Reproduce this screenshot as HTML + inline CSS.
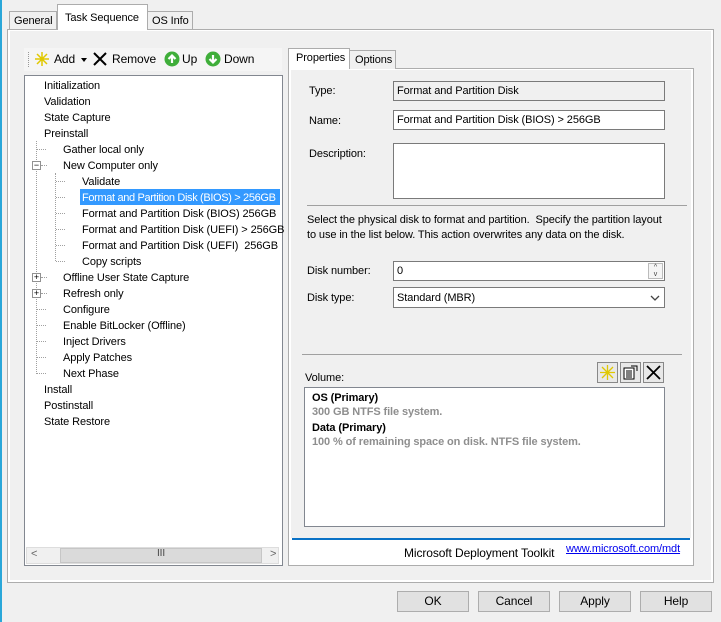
<!DOCTYPE html>
<html><head><style>
*{margin:0;padding:0;box-sizing:border-box}
body{width:721px;height:622px;background:#f0f0f0;font-family:"Liberation Sans",sans-serif;font-size:11px;letter-spacing:-0.1px;color:#000;position:relative;overflow:hidden;white-space:nowrap}
.a{position:absolute;white-space:nowrap}
.tab{position:absolute;border:1px solid #acacac;border-bottom:none;background:#f0f0f0;padding-left:5px;white-space:nowrap}
.box{position:absolute;border:1px solid #7a7a7a;background:#fff;padding:3px 3px;white-space:nowrap}
.btn{position:absolute;top:591px;width:72px;height:21px;border:1px solid #adadad;background:#e1e1e1;text-align:center;line-height:19px;font-size:12px}
.tr{position:absolute;height:16px;line-height:18px;white-space:nowrap}
.dot{position:absolute;border-top:1px dotted #a0a0a0;width:9px}
.vl{position:absolute;border-left:1px dotted #a0a0a0}
.pm{position:absolute;width:9px;height:9px;border:1px solid #919191;background:#fff;font-size:9px;line-height:7px;text-align:center;color:#000}
</style></head><body>
<div class="a" style="left:0;top:0;width:2px;height:622px;background:#2aa7d9"></div>
<div class="a" style="left:7px;top:29px;width:707px;height:554px;border:1px solid #adadad;background:#fff"></div>
<div class="a" style="left:10px;top:31px;width:701px;height:549px;background:#f0f0f0"></div>
<div class="tab" style="left:9px;top:11px;width:48px;height:18px;line-height:18px;padding-left:4px">General</div>
<div class="tab" style="left:57px;top:4px;width:91px;height:26px;background:#fff;padding-left:7px;line-height:14px;padding-top:6px">Task Sequence</div>
<div class="tab" style="left:147px;top:11px;width:46px;height:18px;line-height:18px;padding-left:4px">OS Info</div>

<div class="a" style="left:24px;top:48px;width:258px;height:23px;background:#f5f5f5"></div>
<div class="a" style="left:28px;top:52px;height:15px;border-left:1px dotted #999"></div>
<svg class="a" style="left:34px;top:51px" width="16" height="16"><g stroke="#e0c800" stroke-width="1.5"><path d="M8 1V15M1 8H15M3 3L13 13M13 3L3 13"/></g></svg>
<div class="a" style="left:54px;top:52px;font-size:12px">Add</div>
<div class="a" style="left:81px;top:58px;border:3px solid transparent;border-top:4px solid #000"></div>
<svg class="a" style="left:93px;top:52px" width="14" height="14"><path d="M1 1L13 13M13 1L1 13" stroke="#000" stroke-width="2"/></svg>
<div class="a" style="left:112px;top:52px;font-size:12px">Remove</div>
<svg class="a" style="left:164px;top:51px" width="16" height="16"><circle cx="8" cy="8" r="7.5" fill="#3fae3a"/><path d="M8 12V5M4.5 8L8 4.5 11.5 8" stroke="#fff" stroke-width="2.2" fill="none"/></svg>
<div class="a" style="left:182px;top:52px;font-size:12px">Up</div>
<svg class="a" style="left:205px;top:51px" width="16" height="16"><circle cx="8" cy="8" r="7.5" fill="#3fae3a"/><path d="M8 4V11M4.5 8L8 11.5 11.5 8" stroke="#fff" stroke-width="2.2" fill="none"/></svg>
<div class="a" style="left:224px;top:52px;font-size:12px">Down</div>

<div class="a" style="left:24px;top:75px;width:259px;height:491px;border:1px solid #828790;background:#fff"></div>
<div class="tr" style="left:44px;top:77px">Initialization</div>
<div class="tr" style="left:44px;top:93px">Validation</div>
<div class="tr" style="left:44px;top:109px">State Capture</div>
<div class="tr" style="left:44px;top:125px">Preinstall</div>
<div class="vl" style="left:36px;top:141px;height:233px"></div>
<div class="vl" style="left:55px;top:173px;height:88px"></div>
<div class="dot" style="left:37px;top:149px"></div><div class="tr" style="left:63px;top:141px">Gather local only</div>
<div class="pm" style="left:32px;top:161px">−</div><div class="dot" style="left:41px;top:165px;width:6px"></div><div class="tr" style="left:63px;top:157px">New Computer only</div>
<div class="dot" style="left:56px;top:181px"></div><div class="tr" style="left:82px;top:173px">Validate</div>
<div class="dot" style="left:56px;top:197px"></div><div class="tr" style="left:80px;top:189px;width:200px;background:#3399ff;color:#fff;padding-left:2px;letter-spacing:-0.35px;overflow:hidden">Format and Partition Disk (BIOS) &gt; 256GB</div>
<div class="dot" style="left:56px;top:213px"></div><div class="tr" style="left:82px;top:205px">Format and Partition Disk (BIOS) 256GB</div>
<div class="dot" style="left:56px;top:229px"></div><div class="tr" style="left:82px;top:221px">Format and Partition Disk (UEFI) &gt; 256GB</div>
<div class="dot" style="left:56px;top:245px"></div><div class="tr" style="left:82px;top:237px">Format and Partition Disk (UEFI)&nbsp; 256GB</div>
<div class="dot" style="left:56px;top:261px"></div><div class="tr" style="left:82px;top:253px">Copy scripts</div>
<div class="pm" style="left:32px;top:273px">+</div><div class="dot" style="left:41px;top:277px;width:6px"></div><div class="tr" style="left:63px;top:269px">Offline User State Capture</div>
<div class="pm" style="left:32px;top:289px">+</div><div class="dot" style="left:41px;top:293px;width:6px"></div><div class="tr" style="left:63px;top:285px">Refresh only</div>
<div class="dot" style="left:37px;top:309px"></div><div class="tr" style="left:63px;top:301px">Configure</div>
<div class="dot" style="left:37px;top:325px"></div><div class="tr" style="left:63px;top:317px">Enable BitLocker (Offline)</div>
<div class="dot" style="left:37px;top:341px"></div><div class="tr" style="left:63px;top:333px">Inject Drivers</div>
<div class="dot" style="left:37px;top:357px"></div><div class="tr" style="left:63px;top:349px">Apply Patches</div>
<div class="dot" style="left:37px;top:373px"></div><div class="tr" style="left:63px;top:365px">Next Phase</div>
<div class="tr" style="left:44px;top:381px">Install</div>
<div class="tr" style="left:44px;top:397px">Postinstall</div>
<div class="tr" style="left:44px;top:413px">State Restore</div>
<div class="a" style="left:26px;top:547px;width:253px;height:17px;background:#f0f0f0;border:1px solid #ddd"></div>
<div class="a" style="left:31px;top:548px;color:#666;font-size:11px">&lt;</div>
<div class="a" style="left:270px;top:548px;color:#666;font-size:11px">&gt;</div>
<div class="a" style="left:60px;top:548px;width:202px;height:15px;background:#dadada;border:1px solid #c6c6c6"></div>
<div class="a" style="left:157px;top:548px;font-size:10px;color:#444">III</div>

<div class="a" style="left:288px;top:68px;width:406px;height:498px;border:1px solid #adadad;background:#fff"></div>
<div class="a" style="left:291px;top:70px;width:400px;height:468px;background:#f0f0f0"></div>
<div class="tab" style="left:288px;top:48px;width:62px;height:21px;background:#fff;line-height:18px;padding-left:7px">Properties</div>
<div class="tab" style="left:349px;top:50px;width:47px;height:19px;line-height:19px;padding-left:5px">Options</div>
<div class="a" style="left:309px;top:85px">Type:</div>
<div class="box" style="left:393px;top:81px;width:272px;height:20px;background:#f0f0f0;padding-top:3px">Format and Partition Disk</div>
<div class="a" style="left:309px;top:115px">Name:</div>
<div class="box" style="left:393px;top:110px;width:272px;height:20px;padding-top:3px">Format and Partition Disk (BIOS) &gt; 256GB</div>
<div class="a" style="left:309px;top:148px">Description:</div>
<div class="box" style="left:393px;top:143px;width:272px;height:56px"></div>
<div class="a" style="left:307px;top:205px;width:380px;height:1px;background:#a0a0a0"></div>
<div class="a" style="left:307px;top:213px;line-height:15px">Select the physical disk to format and partition.&nbsp; Specify the partition layout<br>to use in the list below. This action overwrites any data on the disk.</div>
<div class="a" style="left:307px;top:265px">Disk number:</div>
<div class="box" style="left:393px;top:261px;width:272px;height:20px;padding-top:3px">0</div>
<div class="a" style="left:648px;top:263px;width:15px;height:16px;border:1px solid #bbb;background:#f5f5f5;font-size:7px;line-height:7px;text-align:center;color:#444">^<br>v</div>
<div class="a" style="left:307px;top:292px">Disk type:</div>
<div class="box" style="left:393px;top:287px;width:272px;height:21px;padding-top:4px">Standard (MBR)</div>
<svg class="a" style="left:650px;top:295px" width="10" height="6"><path d="M1 1L5 5 9 1" stroke="#444" fill="none" stroke-width="1.3"/></svg>
<div class="a" style="left:302px;top:354px;width:380px;height:1px;background:#a0a0a0"></div>
<div class="a" style="left:305px;top:372px">Volume:</div>
<div class="a" style="left:597px;top:362px;width:21px;height:21px;border:1px solid #888;background:#e8e8e8"></div>
<svg class="a" style="left:599px;top:364px" width="17" height="17"><g stroke="#e0c800" stroke-width="1.3"><path d="M8.5 1V16M1 8.5H16M3 3L14 14M14 3L3 14"/></g></svg>
<div class="a" style="left:620px;top:362px;width:21px;height:21px;border:1px solid #888;background:#e8e8e8"></div>
<svg class="a" style="left:622px;top:364px" width="17" height="17"><rect x="2" y="4" width="10" height="11" fill="#fff" stroke="#000"/><path d="M4 7H10M4 9H10M4 11H10M4 13H10" stroke="#000"/><path d="M9 2H15V7" stroke="#000" fill="none"/></svg>
<div class="a" style="left:643px;top:362px;width:21px;height:21px;border:1px solid #888;background:#e8e8e8"></div>
<svg class="a" style="left:646px;top:365px" width="15" height="15"><path d="M1 1L14 14M14 1L1 14" stroke="#000" stroke-width="1.8"/></svg>
<div class="a" style="left:304px;top:387px;width:361px;height:140px;border:1px solid #828790;background:#fff"></div>
<div class="a" style="left:312px;top:392px;font-weight:bold">OS (Primary)</div>
<div class="a" style="left:312px;top:406px;font-weight:bold;color:#8e8e8e">300 GB NTFS file system.</div>
<div class="a" style="left:312px;top:422px;font-weight:bold">Data (Primary)</div>
<div class="a" style="left:312px;top:436px;font-weight:bold;color:#8e8e8e">100 % of remaining space on disk. NTFS file system.</div>
<div class="a" style="left:292px;top:538px;width:398px;height:2px;background:#0a72c6"></div>
<div class="a" style="left:404px;top:546px;font-size:12px">Microsoft Deployment Toolkit</div>
<div class="a" style="left:566px;top:543px;color:#0000ee;text-decoration:underline;font-size:11px">www.microsoft.com/mdt</div>

<div class="btn" style="left:397px">OK</div>
<div class="btn" style="left:478px">Cancel</div>
<div class="btn" style="left:559px">Apply</div>
<div class="btn" style="left:640px">Help</div>
</body></html>
